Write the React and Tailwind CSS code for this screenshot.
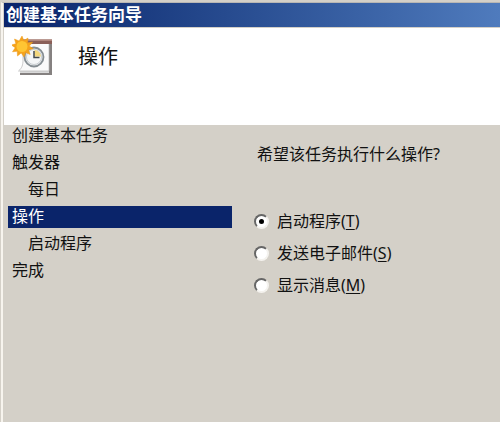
import { useState } from 'react';

const STEPS = [
  { label: '创建基本任务' },
  { label: '触发器' },
  { label: '每日', nested: true },
  { label: '操作', current: true },
  { label: '启动程序', nested: true },
  { label: '完成' },
];

const ACTIONS = [
  { value: 'program', label: '启动程序', accessKey: 'T' },
  { value: 'email', label: '发送电子邮件', accessKey: 'S' },
  { value: 'message', label: '显示消息', accessKey: 'M' },
];

export default function App() {
  const [action, setAction] = useState('program');

  return (
    <div className="min-h-screen flex flex-col bg-[#d4d0c8] border-l border-[#d4d0c8] pt-[2px] text-base leading-[22px] text-[#111111] font-['Noto_Sans','Noto_Sans_CJK_SC',sans-serif]">
      <div className="flex-1 flex flex-col border-l-2 border-t border-l-[#f7f4ee] border-t-[#b9b7b4] pl-px">
        <header className="h-6 flex items-center pl-0.5 bg-linear-to-r from-[#0a246a] to-[#4f7bbd]">
          <span className="text-[17px] leading-6 font-bold text-white">创建基本任务向导</span>
        </header>

        <div className="h-[98px] flex items-start gap-6 bg-white pl-2 pt-2 border-t border-[#d4d0c8]">
          <TaskIcon />
          <h1 className="text-xl leading-[42px]">操作</h1>
        </div>

        <main className="flex-1 flex">
          <nav className="w-[228px] shrink-0 pl-1">
            <ol className="flex flex-col gap-[5px]">
              {STEPS.map((step) => (
                <li
                  key={step.label}
                  aria-current={step.current ? 'step' : undefined}
                  className={`leading-5 pb-0.5 ${step.nested ? 'pl-5' : 'pl-1'} ${step.current ? 'bg-[#0a246a] text-white' : ''}`}
                >
                  {step.label}
                </li>
              ))}
            </ol>
          </nav>

          <fieldset className="flex-1 pl-[22px] pt-[18px]">
            <legend className="float-left w-full pl-[3px] mb-[45px]">希望该任务执行什么操作?</legend>
            <div className="clear-both flex flex-col gap-[10px]">
              {ACTIONS.map((a) => (
                <label key={a.value} className="flex items-center gap-2">
                  <input
                    type="radio"
                    name="action"
                    value={a.value}
                    checked={action === a.value}
                    onChange={() => setAction(a.value)}
                    className="appearance-none size-[15px] shrink-0 grid place-items-center rounded-full border-2 border-t-[#666666] border-l-[#666666] border-r-[#f4f2ee] border-b-[#f4f2ee] bg-white before:size-[5px] before:rounded-full checked:before:bg-black"
                  />
                  <span>
                    {a.label}(<u className="underline-offset-2">{a.accessKey}</u>)
                  </span>
                </label>
              ))}
            </div>
          </fieldset>
        </main>
      </div>
    </div>
  );
}

// Calendar page with a clock on it and a "new" starburst in the corner
function TaskIcon() {
  return (
    <svg width="42" height="42" viewBox="0 0 42 42" aria-hidden="true">
      <path d="M11 4h29v35H8v-3h3z" fill="#858180" />
      <path d="M11 7h26v30H8v-2h3z" fill="#d9d9d9" />
      <path d="M11 7h26v28H6.500c3.500-3 4.500-6 4.500-11z" fill="#fafafa" stroke="#b5b5b5" strokeWidth="0.7" />
      <path d="M11 3.500h29V8H11z" fill="#8a5f58" />
      <path d="M11 3.500h29V5H11z" fill="#b0867d" />
      <circle cx="22" cy="21" r="9.500" fill="#e7eaec" stroke="#858d92" strokeWidth="1.800" />
      <circle cx="22" cy="21" r="7.500" fill="#f4f6f7" stroke="#c2c7ca" strokeWidth="0.800" />
      <path d="M22.500 20.500V14a7 7 0 0 1 6.500 6.500z" fill="#f3d77c" />
      <path d="M22 15v6.500h5.500" fill="none" stroke="#42484c" strokeWidth="1.500" />
      <path
        d="M10 0l1.800 4.600L16 2l-.4 4.800 5-.6-3.300 3.900 4 2.600-4.700 1.200 1.600 4.600-4.500-1.900L12 21l-2.800-4.100L5.500 20l-.3-4.700-4.700.5 2.700-4L-.5 9l4.400-1.300L2.500 3l4.600 2z"
        fill="#f5a31c"
        stroke="#ee9a1a"
        strokeWidth="0.500"
      />
      <circle cx="10" cy="10.500" r="5.500" fill="#ffc533" />
    </svg>
  );
}
